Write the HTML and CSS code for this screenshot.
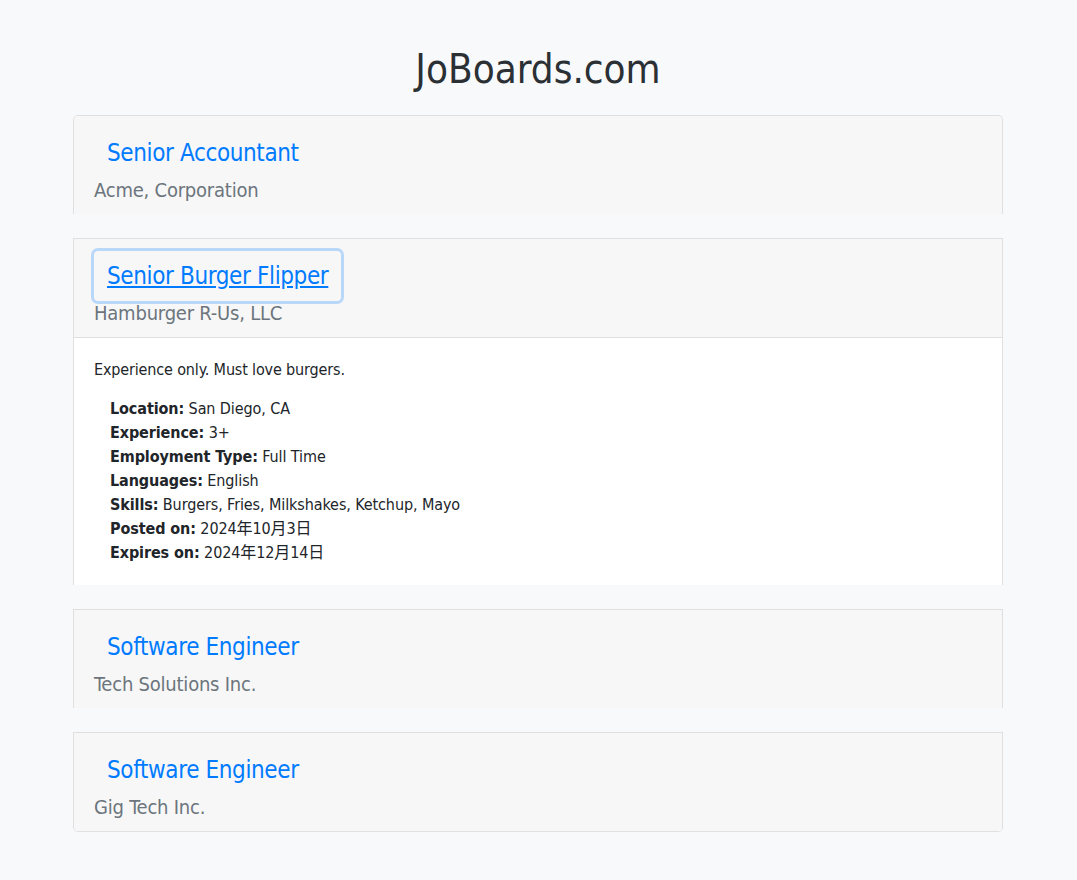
FILE: index.html
```html
<!DOCTYPE html>
<html lang="en">
<head>
<meta charset="utf-8">
<title>JoBoards.com</title>
<link rel="stylesheet" href="styles.css">
</head>
<body>
<div class="container">
  <h1 class="site-title">JoBoards.com</h1>
  <div class="accordion">
    <div class="card">
      <div class="card-header">
        <button class="job-link">Senior Accountant</button>
        <div class="company">Acme, Corporation</div>
      </div>
    </div>
    <div class="card">
      <div class="card-header open">
        <button class="job-link focused">Senior Burger Flipper</button>
        <div class="company">Hamburger R-Us, LLC</div>
      </div>
      <div class="card-body">
        <p class="description">Experience only. Must love burgers.</p>
        <ul class="details">
          <li><strong>Location:</strong> San Diego, CA</li>
          <li><strong>Experience:</strong> 3+</li>
          <li><strong>Employment Type:</strong> Full Time</li>
          <li><strong>Languages:</strong> English</li>
          <li><strong>Skills:</strong> Burgers, Fries, Milkshakes, Ketchup, Mayo</li>
          <li><strong>Posted on:</strong> 2024年10月3日</li>
          <li><strong>Expires on:</strong> 2024年12月14日</li>
        </ul>
      </div>
    </div>
    <div class="card">
      <div class="card-header">
        <button class="job-link">Software Engineer</button>
        <div class="company">Tech Solutions Inc.</div>
      </div>
    </div>
    <div class="card last">
      <div class="card-header">
        <button class="job-link">Software Engineer</button>
        <div class="company">Gig Tech Inc.</div>
      </div>
    </div>
  </div>
</div>
</body>
</html>
```
FILE: styles.css
```css
html, body {
  margin: 0;
  padding: 0;
}
body {
  background: #f8f9fa;
  color: #212529;
  font-family: "DejaVu Sans Condensed", "DejaVu Sans", "Noto Sans CJK JP", sans-serif;
  font-size: 16px;
  line-height: 1.5;
  padding-right: 1px;
}
.container {
  width: 930px;
  margin: 0 auto;
  padding-top: 45px;
}
.site-title {
  margin: 0 0 22px;
  text-align: center;
  font-size: 40px;
  line-height: 48px;
  font-weight: 400;
  color: #2b3035;
}
.card {
  background: #fff;
  border: 1px solid #dfdfdf;
  border-bottom: 0;
  margin-bottom: 24px;
}
.card:first-child {
  border-radius: 5px 5px 0 0;
}
.card.last {
  border-bottom: 1px solid #dfe1e4;
  border-radius: 0 0 5px 5px;
}
.card-header {
  background: #f7f7f7;
  padding: 12px 20px;
}
.card:first-child .card-header {
  border-radius: 4px 4px 0 0;
}
.card.last .card-header {
  border-radius: 0 0 4px 4px;
}
.card-header.open {
  border-bottom: 1px solid #dfdfdf;
}
.job-link {
  display: inline-block;
  font-family: inherit;
  font-size: 24px;
  line-height: 36px;
  letter-spacing: -0.38px;
  padding: 6px 12px;
  border: 1px solid transparent;
  border-radius: 4px;
  background: transparent;
  color: #007bff;
  cursor: pointer;
}
.job-link.focused {
  text-decoration: underline;
  box-shadow: 0 0 0 3px rgba(0, 123, 255, 0.25);
}
.company {
  font-size: 20px;
  line-height: 24px;
  letter-spacing: -0.22px;
  color: #6c757d;
}
.card-body {
  padding: 20px;
}
.description {
  margin: 0 0 15px;
  font-size: 16px;
  line-height: 24px;
  letter-spacing: -0.15px;
}
.details {
  list-style: none;
  margin: 0;
  padding: 0 0 0 16px;
}
.details li {
  letter-spacing: -0.1px;
}
.details strong {
  font-weight: 700;
}
```
